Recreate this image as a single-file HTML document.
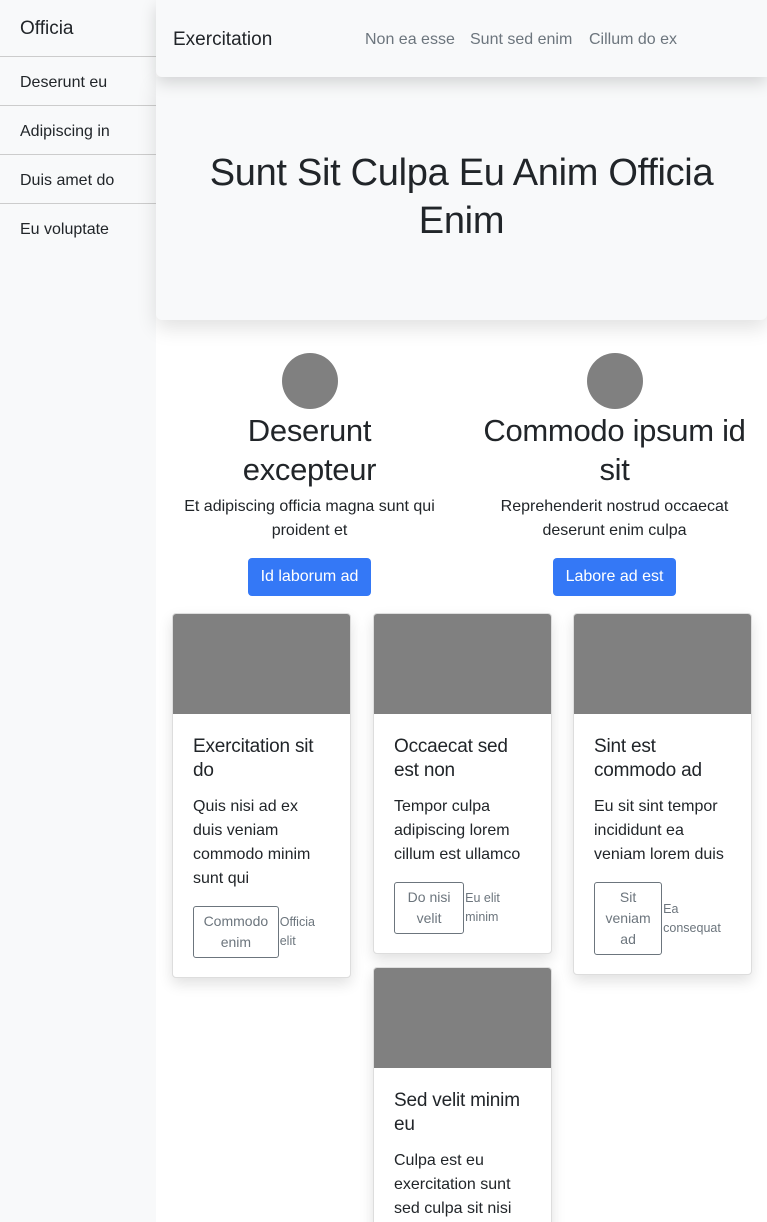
<!DOCTYPE html>
<html><head><style>
*{box-sizing:border-box;margin:0;padding:0}
html,body{width:767px;height:1222px;overflow:hidden}
body{font-family:"Liberation Sans",sans-serif;color:#212529;background:#fff;position:relative}
.side{position:absolute;left:0;top:0;width:156px;height:1222px;background:#f8f9fa}
.side .t{height:57px;padding:18px 20px 0;font-size:19px;border-bottom:1px solid #ccc}
.side .i{height:49px;padding:17px 20px 0;font-size:16px;border-bottom:1px solid #ccc}
.side .i:last-child{border:none}
.nav{position:absolute;left:156px;top:0;width:611px;height:77px;background:#f8f9fa;box-shadow:0 6px 16px rgba(0,0,0,.15);border-radius:0 0 0 6px;z-index:3}
.nav .b{position:absolute;left:17px;top:29px;font-size:19px}
.nav .l{position:absolute;top:31px;font-size:16px;color:#6c757d}
.hero{position:absolute;left:156px;top:77px;width:611px;height:243px;background:#f8f9fa;box-shadow:0 8px 20px rgba(0,0,0,.12);border-radius:0 0 6px 6px;z-index:2}
.hero h1{position:absolute;top:72px;left:0;width:611px;text-align:center;font-size:38px;font-weight:bold;line-height:48px;letter-spacing:-0.3px}
.f{position:absolute;top:353px;width:305px;text-align:center}
.circ{width:56px;height:56px;border-radius:50%;background:#808080;margin:0 auto}
.f h2{font-size:31px;font-weight:bold;line-height:39px;margin-top:2px;letter-spacing:-0.3px}
.f p{font-size:16px;line-height:24px;margin-top:6px;padding:0 14px}
.btn{display:inline-block;background:#3478f6;color:#fff;border-radius:4px;font-size:16px;line-height:38px;padding:0 13px;margin-top:15px}
.card{position:absolute;width:179px;background:#fff;border:1px solid #ddd;border-radius:4px;box-shadow:0 6px 14px rgba(0,0,0,.12);overflow:hidden}
.card .im{height:100px;background:#808080}
.card .bd{padding:20px 20px 19px}
.card h5{font-size:19px;font-weight:bold;line-height:24px;margin-top:1px;letter-spacing:-0.2px}
.card p{font-size:16px;line-height:24px;margin-top:12px}
.row{display:flex;align-items:center;margin-top:15px}
.ob{border:1px solid #6c757d;border-radius:3px;color:#6c757d;font-size:14px;line-height:21px;padding:4px 6px;text-align:center}
.sm{font-size:12.5px;line-height:19px;color:#6c757d;padding-left:1px}
h1,h2,h5{font-weight:normal!important}
</style></head><body>
<div class="side"><div class="t">Officia</div><div class="i">Deserunt eu</div><div class="i">Adipiscing in</div><div class="i">Duis amet do</div><div class="i">Eu voluptate</div></div>
<div class="nav"><span class="b">Exercitation</span><span class="l" style="left:209px">Non ea esse</span><span class="l" style="left:314px">Sunt sed enim</span><span class="l" style="left:433px">Cillum do ex</span></div>
<div class="hero"><h1>Sunt Sit Culpa Eu Anim Officia<br>Enim</h1></div>
<div class="f" style="left:157px"><div class="circ"></div><h2>Deserunt<br>excepteur</h2><p>Et adipiscing officia magna sunt qui proident et</p><span class="btn">Id laborum ad</span></div>
<div class="f" style="left:462px"><div class="circ"></div><h2>Commodo ipsum id<br>sit</h2><p>Reprehenderit nostrud occaecat deserunt enim culpa</p><span class="btn">Labore ad est</span></div>
<div class="card" style="left:172px;top:613px"><div class="im"></div><div class="bd"><h5>Exercitation sit do</h5><p>Quis nisi ad ex duis veniam commodo minim sunt qui</p><div class="row"><div class="ob" style="width:92px">Commodo enim</div><div class="sm">Officia elit</div></div></div></div>
<div class="card" style="left:373px;top:613px"><div class="im"></div><div class="bd"><h5>Occaecat sed est non</h5><p>Tempor culpa adipiscing lorem cillum est ullamco</p><div class="row"><div class="ob" style="width:75px">Do nisi velit</div><div class="sm">Eu elit minim</div></div></div></div>
<div class="card" style="left:573px;top:613px"><div class="im"></div><div class="bd"><h5>Sint est commodo ad</h5><p>Eu sit sint tempor incididunt ea veniam lorem duis</p><div class="row"><div class="ob" style="width:75px">Sit veniam ad</div><div class="sm">Ea consequat</div></div></div></div>
<div class="card" style="left:373px;top:967px"><div class="im"></div><div class="bd"><h5>Sed velit minim eu</h5><p>Culpa est eu exercitation sunt sed culpa sit nisi</p></div></div>
</body></html>
